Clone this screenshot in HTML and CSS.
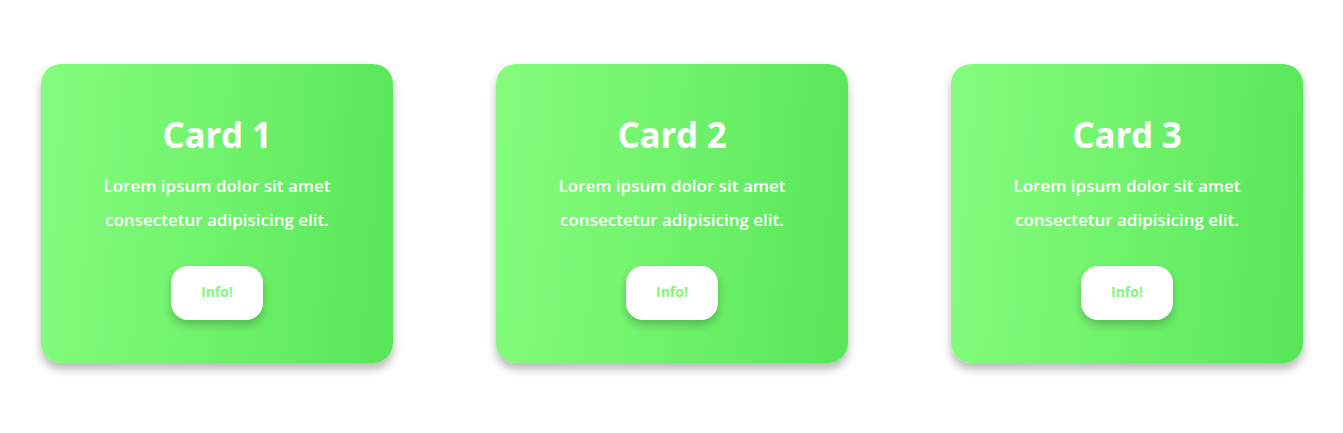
FILE: index.html
```html
<!DOCTYPE html>
<html>
<head>
<meta charset="utf-8">
<link rel="stylesheet" href="styles.css">
</head>
<body>
<main class="cards">
  <div class="card">
    <h1 class="card-title">Card 1</h1>
    <p class="card-text">Lorem ipsum dolor sit amet<br>consectetur adipisicing elit.</p>
    <button class="card-btn">Info!</button>
  </div>
  <div class="card">
    <h1 class="card-title">Card 2</h1>
    <p class="card-text">Lorem ipsum dolor sit amet<br>consectetur adipisicing elit.</p>
    <button class="card-btn">Info!</button>
  </div>
  <div class="card">
    <h1 class="card-title">Card 3</h1>
    <p class="card-text">Lorem ipsum dolor sit amet<br>consectetur adipisicing elit.</p>
    <button class="card-btn">Info!</button>
  </div>
</main>
</body>
</html>
```
FILE: styles.css
```css
* { box-sizing: border-box; }
html, body { margin: 0; padding: 0; background: #fff; }
body {
  font-family: "Open Sans", "DejaVu Sans", sans-serif;
  width: 1343px;
  height: 433px;
}
.cards {
  display: flex;
  gap: 103px;
  padding: 64px 40px 0 41px;
}
.card {
  width: 352px;
  height: 299px;
  border-radius: 20px;
  background: linear-gradient(95deg, #84fd7c 0%, #70f26c 50%, #57e657 100%);
  box-shadow: 0 6px 10px rgba(0, 0, 0, 0.28);
  display: flex;
  flex-direction: column;
  align-items: center;
  color: #fff;
  padding-top: 49px;
}
.card-title {
  margin: 0;
  font-size: 35px;
  font-weight: 700;
  line-height: 43px;
  letter-spacing: -0.3px;
}
.card-text {
  margin: 13px 0 0;
  font-size: 17px;
  font-weight: 600;
  line-height: 34px;
  text-align: center;
}
.card-btn {
  margin-top: 29px;
  width: 92px;
  height: 54px;
  padding: 0 0 4px;
  border: none;
  border-radius: 17px;
  background: #fff;
  color: #80f878;
  font-family: inherit;
  font-size: 14px;
  font-weight: 700;
  box-shadow: 0 5px 8px rgba(0, 0, 0, 0.22);
  cursor: pointer;
}
```
